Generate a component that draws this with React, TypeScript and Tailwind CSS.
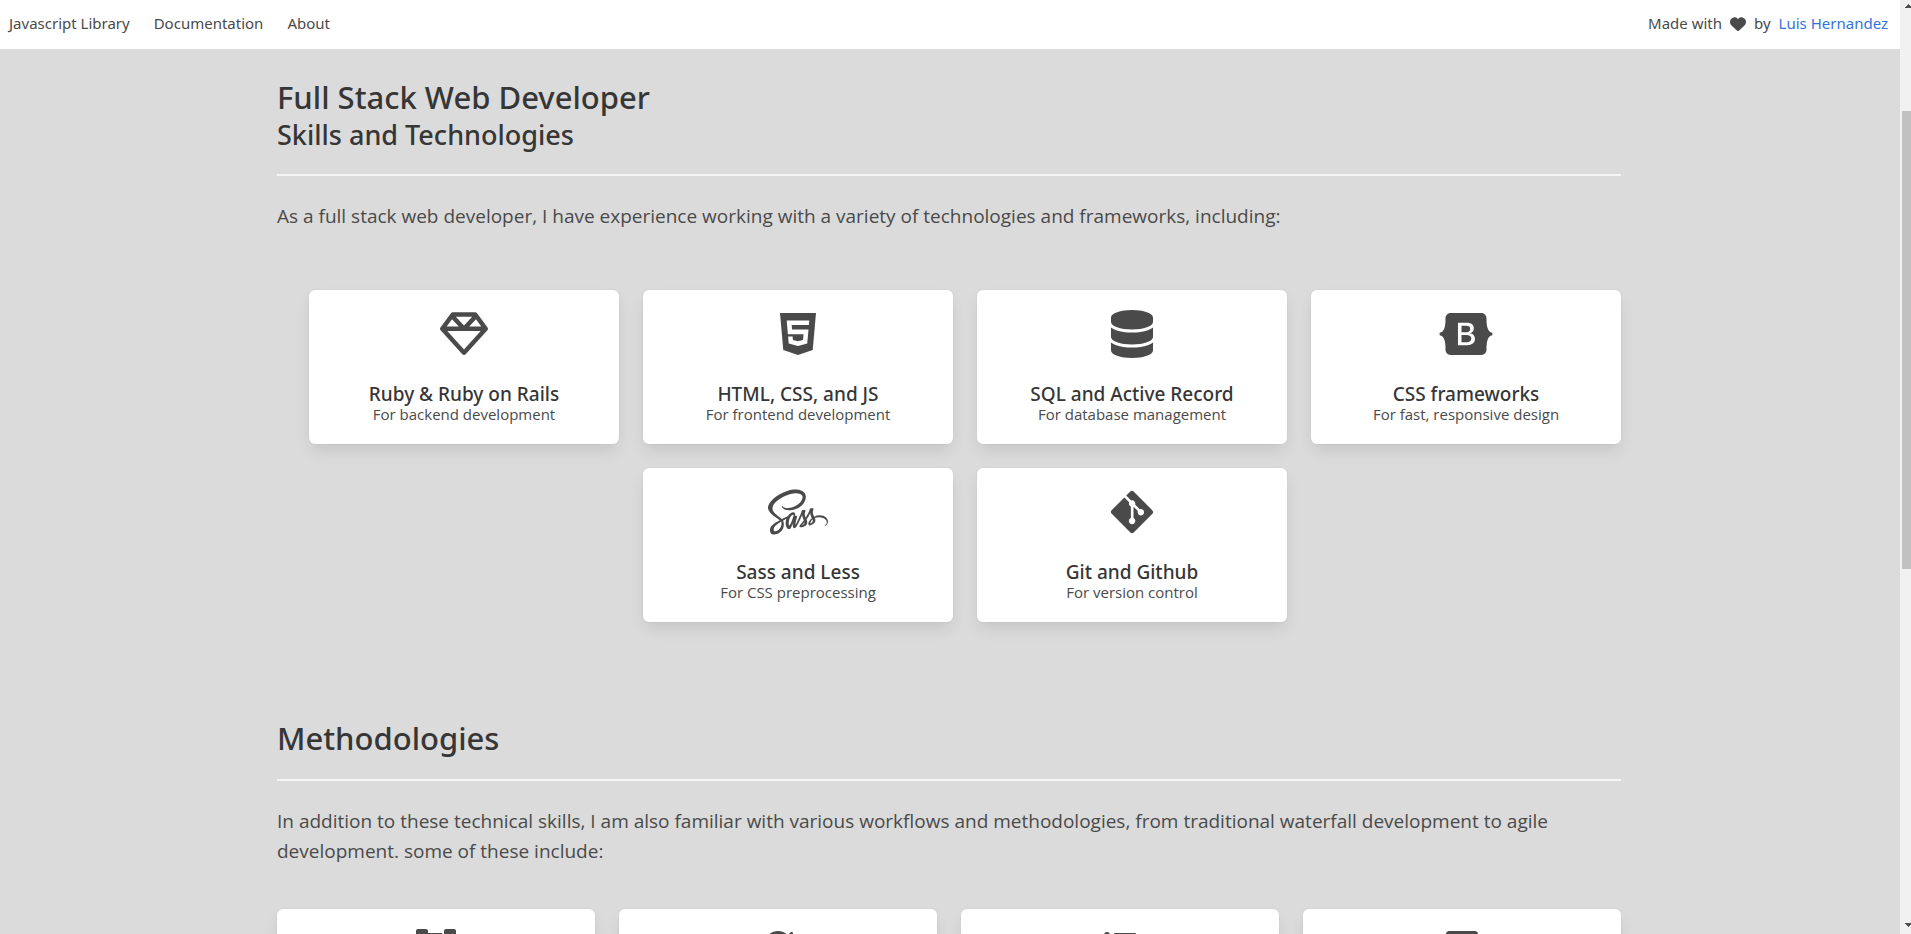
import type { IconType } from "react-icons";
import {
  FaBootstrap,
  FaDatabase,
  FaGitAlt,
  FaHeart,
  FaHtml5,
  FaRegGem,
  FaRotate,
  FaSass,
} from "react-icons/fa6";
import { FaColumns, FaListUl, FaProjectDiagram } from "react-icons/fa";

type Item = { icon: IconType; width: string; title: string; text: string };

const skills: Item[] = [
  { icon: FaRegGem, width: "w-12", title: "Ruby & Ruby on Rails", text: "For backend development" },
  { icon: FaHtml5, width: "w-12", title: "HTML, CSS, and JS", text: "For frontend development" },
  { icon: FaDatabase, width: "w-12", title: "SQL and Active Record", text: "For database management" },
  { icon: FaBootstrap, width: "w-[54px]", title: "CSS frameworks", text: "For fast, responsive design" },
  { icon: FaSass, width: "w-[60px]", title: "Sass and Less", text: "For CSS preprocessing" },
  { icon: FaGitAlt, width: "w-12", title: "Git and Github", text: "For version control" },
];

const methods: { icon: IconType; width: string }[] = [
  { icon: FaProjectDiagram, width: "w-10" },
  { icon: FaRotate, width: "w-8" },
  { icon: FaListUl, width: "w-8" },
  { icon: FaColumns, width: "w-8" },
];

const cardStyle =
  "rounded-md bg-white shadow-[0_8px_16px_-2px_rgba(10,10,10,0.1),0_0_0_1px_rgba(10,10,10,0.02)]";

const headingStyle = "font-['Noto_Sans',sans-serif] font-medium text-[#363636]";

function Divider() {
  return <hr className="mt-6 mb-[25px] h-[2px] border-0 bg-[#f5f5f5]" />;
}

function Scrollbar() {
  return (
    <div aria-hidden="true" className="flex w-[11px] shrink-0 flex-col overflow-hidden bg-[#f1f1f1] pt-1 pb-[7px] pl-[2px]">
      <svg className="ml-[3px] h-1 w-[7px] shrink-0" viewBox="0 0 7 4" shapeRendering="crispEdges" fill="#505050">
        <path d="M3 0h1v1h1v1h1v1h1v1H0V3h1V2h1V1h1z" />
      </svg>
      <div className="flex-[103]" />
      <div className="flex-[458] bg-[#c1c1c1]" />
      <div className="flex-[354]" />
      <svg className="ml-[3px] h-1 w-[7px] shrink-0" viewBox="0 0 7 4" shapeRendering="crispEdges" fill="#505050">
        <path d="M0 0h7v1H6v1H5v1H4v1H3V3H2V2H1V1H0z" />
      </svg>
    </div>
  );
}

export default function App() {
  return (
    <div className="flex h-screen overflow-hidden bg-[#dbdbdb] font-['Open_Sans','Noto_Sans',sans-serif] text-[#4a4a4a]">
      <div className="flex min-w-0 flex-1 flex-col">
        <nav className="flex h-[49px] shrink-0 items-center justify-between bg-white px-[9px] pb-0.5 font-['Noto_Sans',sans-serif] text-[15px]">
          <div className="flex gap-6">
            <a href="#library">Javascript Library</a>
            <a href="#docs">Documentation</a>
            <a href="#about">About</a>
          </div>
          <p className="flex items-center gap-2 pr-[3px]">
            Made with <FaHeart className="size-4" /> by
            <a href="#author" className="text-[#3273dc]">Luis Hernandez</a>
          </p>
        </nav>
        <main className="pt-[26px] pr-0.5">
          <div className="mx-auto w-full max-w-[1344px]">
            <section>
              <h1 className={`text-[31px] leading-[44px] ${headingStyle}`}>Full Stack Web Developer</h1>
              <h2 className={`text-[27px] leading-[31px] ${headingStyle}`}>Skills and Technologies</h2>
              <Divider />
              <p className="text-[19px] leading-[30px]">
                As a full stack web developer, I have experience working with a variety of technologies and frameworks, including:
              </p>
              <ul className="mt-[59px] flex flex-wrap justify-center gap-6 pl-8">
                {skills.map(({ icon: Icon, width, title, text }) => (
                  <li key={title} className={`flex h-[154px] w-[310px] flex-col items-center pt-5 ${cardStyle}`}>
                    <Icon className={`h-12 shrink-0 ${width}`} />
                    <h3 className={`mt-6 text-[19px] leading-6 ${headingStyle}`}>{title}</h3>
                    <p className="text-[15px] leading-4">{text}</p>
                  </li>
                ))}
              </ul>
            </section>
            <section className="pt-[99px]">
              <h2 className={`text-[31px] leading-[34px] ${headingStyle}`}>Methodologies</h2>
              <Divider />
              <p className="text-[19px] leading-[30px]">
                In addition to these technical skills, I am also familiar with various workflows and methodologies, from traditional waterfall development to agile development. some of these include:
              </p>
              <ul className="mt-[43px] grid grid-cols-4 gap-6">
                {methods.map(({ icon: Icon, width }, i) => (
                  <li key={i} className={`flex h-[154px] justify-center pt-5 ${cardStyle}`}>
                    <Icon className={`h-8 ${width}`} />
                  </li>
                ))}
              </ul>
            </section>
          </div>
        </main>
      </div>
      <Scrollbar />
    </div>
  );
}
